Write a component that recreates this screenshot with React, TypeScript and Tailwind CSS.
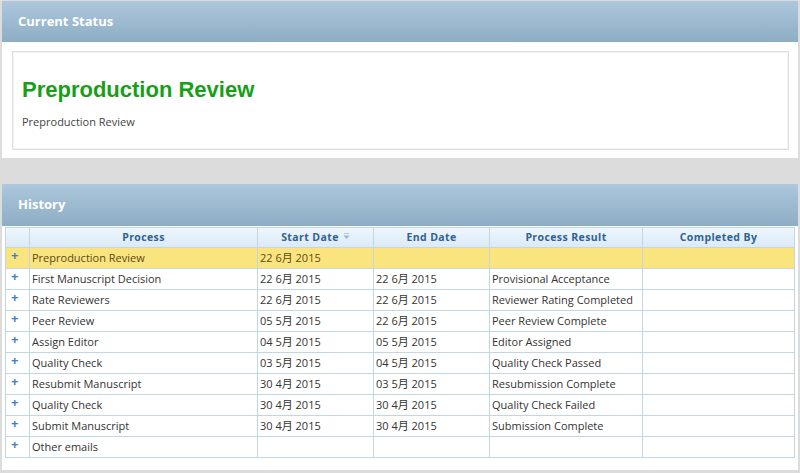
import React from 'react';

type Row = { process: string; start: string; end: string; result: string; by: string; current?: boolean };

const ROWS: Row[] = [
  { process: 'Preproduction Review', start: '22 6月 2015', end: '', result: '', by: '', current: true },
  { process: 'First Manuscript Decision', start: '22 6月 2015', end: '22 6月 2015', result: 'Provisional Acceptance', by: '' },
  { process: 'Rate Reviewers', start: '22 6月 2015', end: '22 6月 2015', result: 'Reviewer Rating Completed', by: '' },
  { process: 'Peer Review', start: '05 5月 2015', end: '22 6月 2015', result: 'Peer Review Complete', by: '' },
  { process: 'Assign Editor', start: '04 5月 2015', end: '05 5月 2015', result: 'Editor Assigned', by: '' },
  { process: 'Quality Check', start: '03 5月 2015', end: '04 5月 2015', result: 'Quality Check Passed', by: '' },
  { process: 'Resubmit Manuscript', start: '30 4月 2015', end: '03 5月 2015', result: 'Resubmission Complete', by: '' },
  { process: 'Quality Check', start: '30 4月 2015', end: '30 4月 2015', result: 'Quality Check Failed', by: '' },
  { process: 'Submit Manuscript', start: '30 4月 2015', end: '30 4月 2015', result: 'Submission Complete', by: '' },
  { process: 'Other emails', start: '', end: '', result: '', by: '' },
];

const PanelHeader: React.FC<{ title: string; h: string }> = ({ title, h }) => (
  <div className={`${h} flex items-center px-4 bg-gradient-to-b from-[#adc7dc] to-[#8dadc4] text-white text-[13px] font-bold`}>
    {title}
  </div>
);

const cols = 'grid grid-cols-[24px_228px_116px_116px_153px_1fr]';

const App: React.FC = () => {
  return (
    <div className="min-h-[473px] bg-[#dcdcdc] pt-[1px] text-[#333] font-['Open_Sans','Noto_Sans_CJK_SC',sans-serif]">
      {/* Current status */}
      <div className="mx-[2px] bg-white">
        <PanelHeader title="Current Status" h="h-[41px]" />
        <div className="pt-[9px] pb-[8px] pl-[10px] pr-[9px]">
          <div className="h-[99px] border border-[#dedede] shadow-[inset_0_0_0_1px_#f4f4f4] px-[9px] pt-[24px]">
            <h1 className="text-[22px] leading-[28px] font-bold text-[#16a016] font-['Liberation_Sans',sans-serif]">Preproduction Review</h1>
            <p className="mt-[10px] text-[11px] text-[#444]">Preproduction Review</p>
          </div>
        </div>
      </div>

      {/* History */}
      <div className="mx-[2px] mt-[26px] bg-white pb-[12px]">
        <PanelHeader title="History" h="h-[42px]" />
        <div className="mx-[3px] mt-[1px] border border-[#c3d6e4] text-[11px]">
          <div className={`${cols} h-[19px] bg-gradient-to-b from-[#eef6fd] to-[#dceaf6] text-[#2f6390] text-[10.5px] font-bold tracking-[0.4px]`}>
            <div className="border-r border-[#c3d6e4]" />
            <div className="border-r border-[#c3d6e4] flex items-center justify-center">Process</div>
            <div className="border-r border-[#c3d6e4] flex items-center justify-center gap-1">
              Start Date
              <svg width="7" height="8" viewBox="0 0 7 8" className="-mt-[4px]">
                <path d="M1 1.5h5" stroke="#b8c8d6" strokeWidth="1" />
                <path d="M0.5 3.5h6l-3 3.5z" fill="#9fb6ca" />
              </svg>
            </div>
            <div className="border-r border-[#c3d6e4] flex items-center justify-center">End Date</div>
            <div className="border-r border-[#c3d6e4] flex items-center justify-center">Process Result</div>
            <div className="flex items-center justify-center">Completed By</div>
          </div>
          {ROWS.map((r, i) => (
            <div
              key={i}
              className={`${cols} h-[21px] border-t border-[#c3d6e4] ${r.current ? 'bg-[#fae47e] text-[#5a4a1a]' : 'bg-white text-[#333]'}`}
            >
              <div className="border-r border-[#c3d6e4] pl-[5px] text-[#3d80c4] font-bold text-[13px] leading-[14px]">+</div>
              <div className="border-r border-[#c3d6e4] flex items-center px-[2px]">{r.process}</div>
              <div className="border-r border-[#c3d6e4] flex items-center px-[2px]">{r.start}</div>
              <div className="border-r border-[#c3d6e4] flex items-center px-[2px]">{r.end}</div>
              <div className="border-r border-[#c3d6e4] flex items-center px-[2px]">{r.result}</div>
              <div className="flex items-center px-[2px]">{r.by}</div>
            </div>
          ))}
        </div>
      </div>
    </div>
  );
};

export default App;
